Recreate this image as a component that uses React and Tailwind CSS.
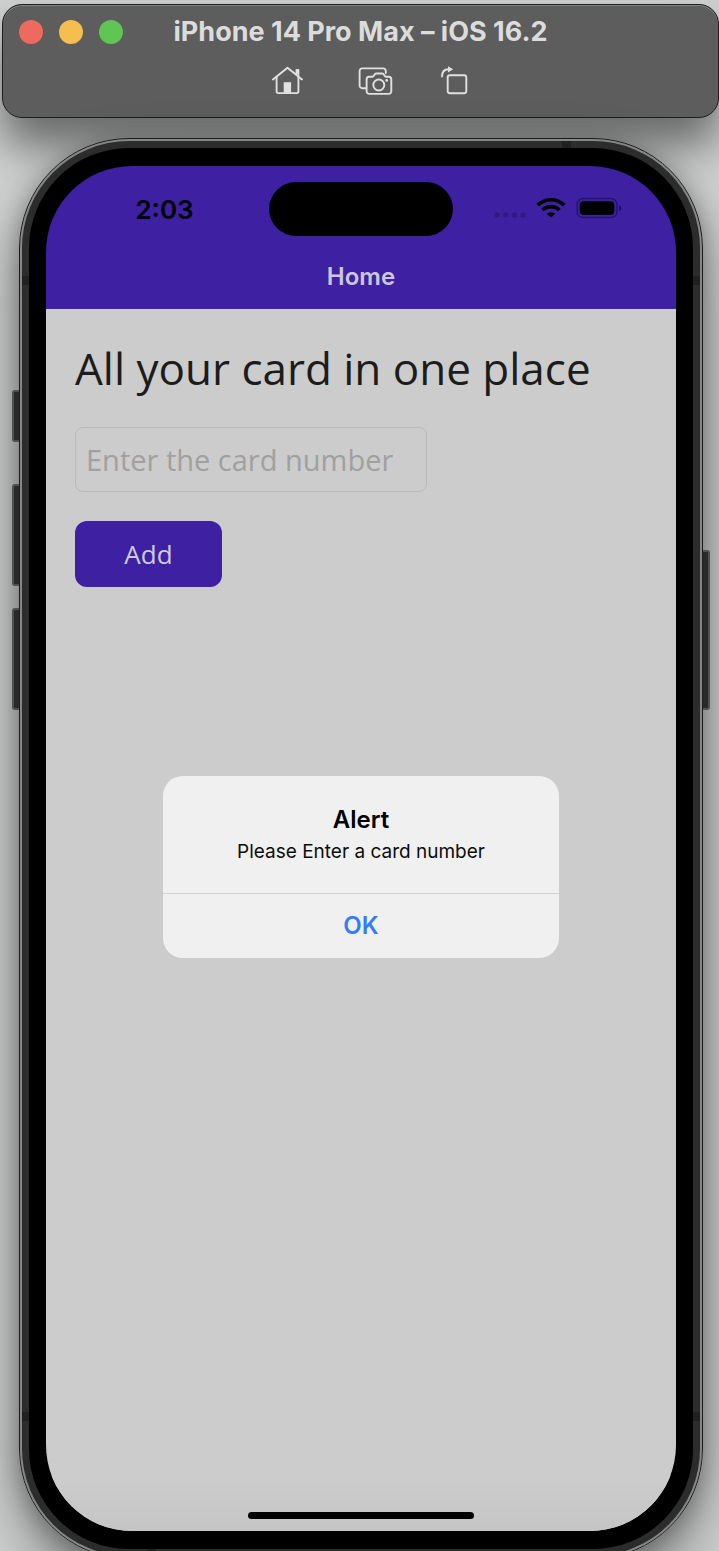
import React from "react";

function HomeIcon() {
  return (
    <svg width="32" height="32" viewBox="0 0 32 32" fill="none" stroke="#e0e1e0" strokeWidth="1.9" strokeLinecap="round" strokeLinejoin="round">
      <path d="M1 14.5 15.5 2.7 30 14.5" />
      <path d="M4.6 12v14.7a1.4 1.4 0 0 0 1.4 1.4h19a1.4 1.4 0 0 0 1.4-1.4V12" />
      <path d="M24.5 8.5V5h1.9v5.6" />
      <path d="M11.7 17.2h7.4v10.6h-7.4z" fill="#e0e1e0" stroke="none" />
    </svg>
  );
}

function CameraIcon() {
  return (
    <svg width="36" height="32" viewBox="0 0 36 32" fill="none" stroke="#e0e1e0" strokeWidth="1.9" strokeLinecap="round" strokeLinejoin="round">
      <path d="M7.6 23.2H4.2A2.6 2.6 0 0 1 1.6 20.6V6a2.6 2.6 0 0 1 2.6-2.6h21a2.6 2.6 0 0 1 2.6 2.6v2" />
      <path d="M11.2 11.8h3.2c1.6 0 1.8-3.3 3.8-3.3h6c2 0 2.2 3.3 3.8 3.3h2.7a2.6 2.6 0 0 1 2.6 2.6v11.9a2.6 2.6 0 0 1-2.6 2.6H11.2a2.6 2.6 0 0 1-2.6-2.6V14.4a2.6 2.6 0 0 1 2.6-2.6z" />
      <circle cx="20.8" cy="20" r="5.5" />
      <circle cx="28.7" cy="15.4" r="1.4" fill="#e0e1e0" stroke="none" />
    </svg>
  );
}

function RotateIcon() {
  return (
    <svg width="30" height="32" viewBox="0 0 30 32" fill="none" stroke="#e0e1e0" strokeWidth="1.9" strokeLinecap="round" strokeLinejoin="round">
      <path d="M2 11.5C2 6.5 4 4.4 8.5 4.3" />
      <path d="M8 1.3 13.2 4.3 8 7.4z" fill="#e0e1e0" stroke="none" />
      <rect x="7.7" y="10.3" width="18.6" height="18" rx="2.2" />
    </svg>
  );
}

function WifiIcon() {
  return (
    <svg width="30" height="22" viewBox="0 0 30 22" fill="none" stroke="#000" strokeWidth="3.7">
      <path d="M1.8 8.2C9.5.9 20.5.9 28.2 8.2" />
      <path d="M6.6 13C11.5 8.4 18.5 8.4 23.4 13" />
      <path d="M15 20.8 10.9 16.7C13.2 14.7 16.8 14.7 19.1 16.7z" fill="#000" stroke="none" />
    </svg>
  );
}

function BatteryIcon() {
  return (
    <svg width="46" height="22" viewBox="0 0 46 22">
      <rect x="1" y="1.6" width="40" height="19" rx="6" fill="none" stroke="#000" strokeOpacity=".38" strokeWidth="1.5" />
      <rect x="3.7" y="4.3" width="34.6" height="13.8" rx="4" />
      <path d="M43 8.2c3 1.2 3 4.8 0 6z" fillOpacity=".45" />
    </svg>
  );
}

function SignalDots() {
  return (
    <svg width="32" height="22" viewBox="0 0 32 22" fill="#000" fillOpacity=".2">
      <circle cx="3" cy="18" r="2.7" />
      <circle cx="11.7" cy="18" r="2.7" />
      <circle cx="20.4" cy="18" r="2.7" />
      <circle cx="29" cy="18" r="2.7" />
    </svg>
  );
}

function Toolbar() {
  return (
    <header className="ml-0.5 mt-1 flex h-[114px] shrink-0 flex-col rounded-[20px] border border-[#1d1d1d] bg-[#5c5d5c] pt-2 shadow-[0_28px_44px_rgba(0,0,0,0.5),inset_0_1px_0_#858685]">
      <div className="grid grid-cols-[1fr_auto_1fr] items-center px-4">
        <div className="flex gap-4">
          <button type="button" aria-label="Close" className="size-6 rounded-full bg-[#ee6a5f]" />
          <button type="button" aria-label="Minimize" className="size-6 rounded-full bg-[#f5be4f]" />
          <button type="button" aria-label="Zoom" className="size-6 rounded-full bg-[#61c554]" />
        </div>
        <h1 className="text-[27px] font-bold leading-[38px] text-[#dcdcdc]">iPhone 14 Pro Max – iOS 16.2</h1>
      </div>
      <div className="mt-3.5 flex justify-center gap-[54px] pl-5">
        <button type="button" aria-label="Home"><HomeIcon /></button>
        <button type="button" aria-label="Screenshot"><CameraIcon /></button>
        <button type="button" aria-label="Rotate" className="-ml-2"><RotateIcon /></button>
      </div>
    </header>
  );
}

function AlertDialog() {
  return (
    <div className="absolute inset-0 flex items-center justify-center pt-[37px]">
      <div role="alertdialog" aria-labelledby="alert-title" aria-describedby="alert-text" className="w-[396px] overflow-hidden rounded-[20px] bg-[#f0f0f0] text-center">
        <div className="border-b border-[#d2d3d2] px-6 pb-[25px] pt-7">
          <h2 id="alert-title" className="text-[24px] font-semibold leading-8 text-black">Alert</h2>
          <p id="alert-text" className="text-[19px] leading-8 text-[#0c0c0c]">Please Enter a card number</p>
        </div>
        <button type="button" className="h-16 w-full text-[24px] font-semibold text-[#347df6]">OK</button>
      </div>
    </div>
  );
}

function Screen() {
  return (
    <main className="relative flex h-full flex-col overflow-hidden rounded-[86px]">
      <div className="h-[143px] shrink-0 bg-[#3d21a2] pt-4">
        <div className="flex h-[54px] items-center">
          <div className="flex-1 pl-3.5 text-center text-[26px] font-semibold text-black">2:03</div>
          <div className="h-[54px] w-[184px] rounded-full bg-black" />
          <div className="flex flex-1 items-center justify-center gap-2.5 pb-0.5 pr-3.5">
            <SignalDots />
            <WifiIcon />
            <BatteryIcon />
          </div>
        </div>
        <h2 className="mt-[21px] text-center text-[24px] font-semibold leading-10 text-[#cbc8d8]">Home</h2>
      </div>
      <div className="flex min-h-0 flex-1 flex-col bg-[#cccccc]">
        <form className="flex flex-col items-start gap-[29px] p-[29px] font-['Open_Sans',sans-serif]" onSubmit={(e) => e.preventDefault()}>
          <label htmlFor="card" className="text-[44px] leading-[60px] text-[#1c1c1c]">All your card in one place</label>
          <input
            id="card"
            type="text"
            placeholder="Enter the card number"
            className="h-[65px] w-[352px] rounded-lg border border-[#bababa] bg-transparent px-2.5 text-[29px] text-[#1c1c1c] placeholder:text-[#a0a0a0]"
          />
          <button type="submit" className="h-[66px] w-[147px] rounded-xl bg-[#3d21a2] text-[26px] text-[#cfcce0]">Add</button>
        </form>
        <div className="mt-auto h-14 bg-linear-to-b from-[#cccccc] to-[#c5c5c5] pt-[37px]">
          <div className="mx-auto h-[7px] w-[226px] rounded-full bg-black" />
        </div>
      </div>
      <AlertDialog />
    </main>
  );
}

function Phone() {
  return (
    <div className="relative -mb-2 ml-[19px] mr-4 mt-5 flex min-h-0 flex-1 flex-col">
      <div className="absolute inset-0 rounded-[110px] shadow-[0_30px_60px_rgba(0,0,0,0.4),0_4px_24px_rgba(0,0,0,0.3)]" />
      <div className="absolute -left-[7px] top-[252px] h-[52px] w-3 rounded-[3px] border-2 border-[#505150] bg-[#2a2a2a]" />
      <div className="absolute -left-[7px] top-[346px] h-[102px] w-3 rounded-[3px] border-2 border-[#505150] bg-[#2a2a2a]" />
      <div className="absolute -left-[7px] top-[470px] h-[102px] w-3 rounded-[3px] border-2 border-[#505150] bg-[#2a2a2a]" />
      <div className="absolute -right-[7px] top-[412px] h-[160px] w-3 rounded-[3px] border-2 border-[#505150] bg-[#2a2a2a]" />
      <div className="relative min-h-0 flex-1 rounded-[110px] border border-[#1c1c1c] bg-[#858685] p-0.5">
        <div className="h-full rounded-[107px] bg-[#2c2c2c] p-[7px]">
          <div className="h-full rounded-[100px] bg-black px-[17px] py-[18px]">
            <Screen />
          </div>
        </div>
        <div className="absolute left-[2px] top-[137px] h-[9px] w-[7px] bg-[#212121]" />
        <div className="absolute right-[2px] top-[137px] h-[9px] w-[7px] bg-[#212121]" />
        <div className="absolute bottom-[137px] left-[2px] h-[9px] w-[7px] bg-[#212121]" />
        <div className="absolute bottom-[137px] right-[2px] h-[9px] w-[7px] bg-[#212121]" />
        <div className="absolute right-[131px] top-[2px] h-[7px] w-[9px] bg-[#212121]" />
        <div className="absolute bottom-[2px] left-[127px] h-[7px] w-[9px] bg-[#212121]" />
      </div>
    </div>
  );
}

export default function App() {
  return (
    <div className="flex h-screen flex-col overflow-hidden bg-[#d0d2d2] font-['Inter',sans-serif]">
      <Toolbar />
      <Phone />
    </div>
  );
}
